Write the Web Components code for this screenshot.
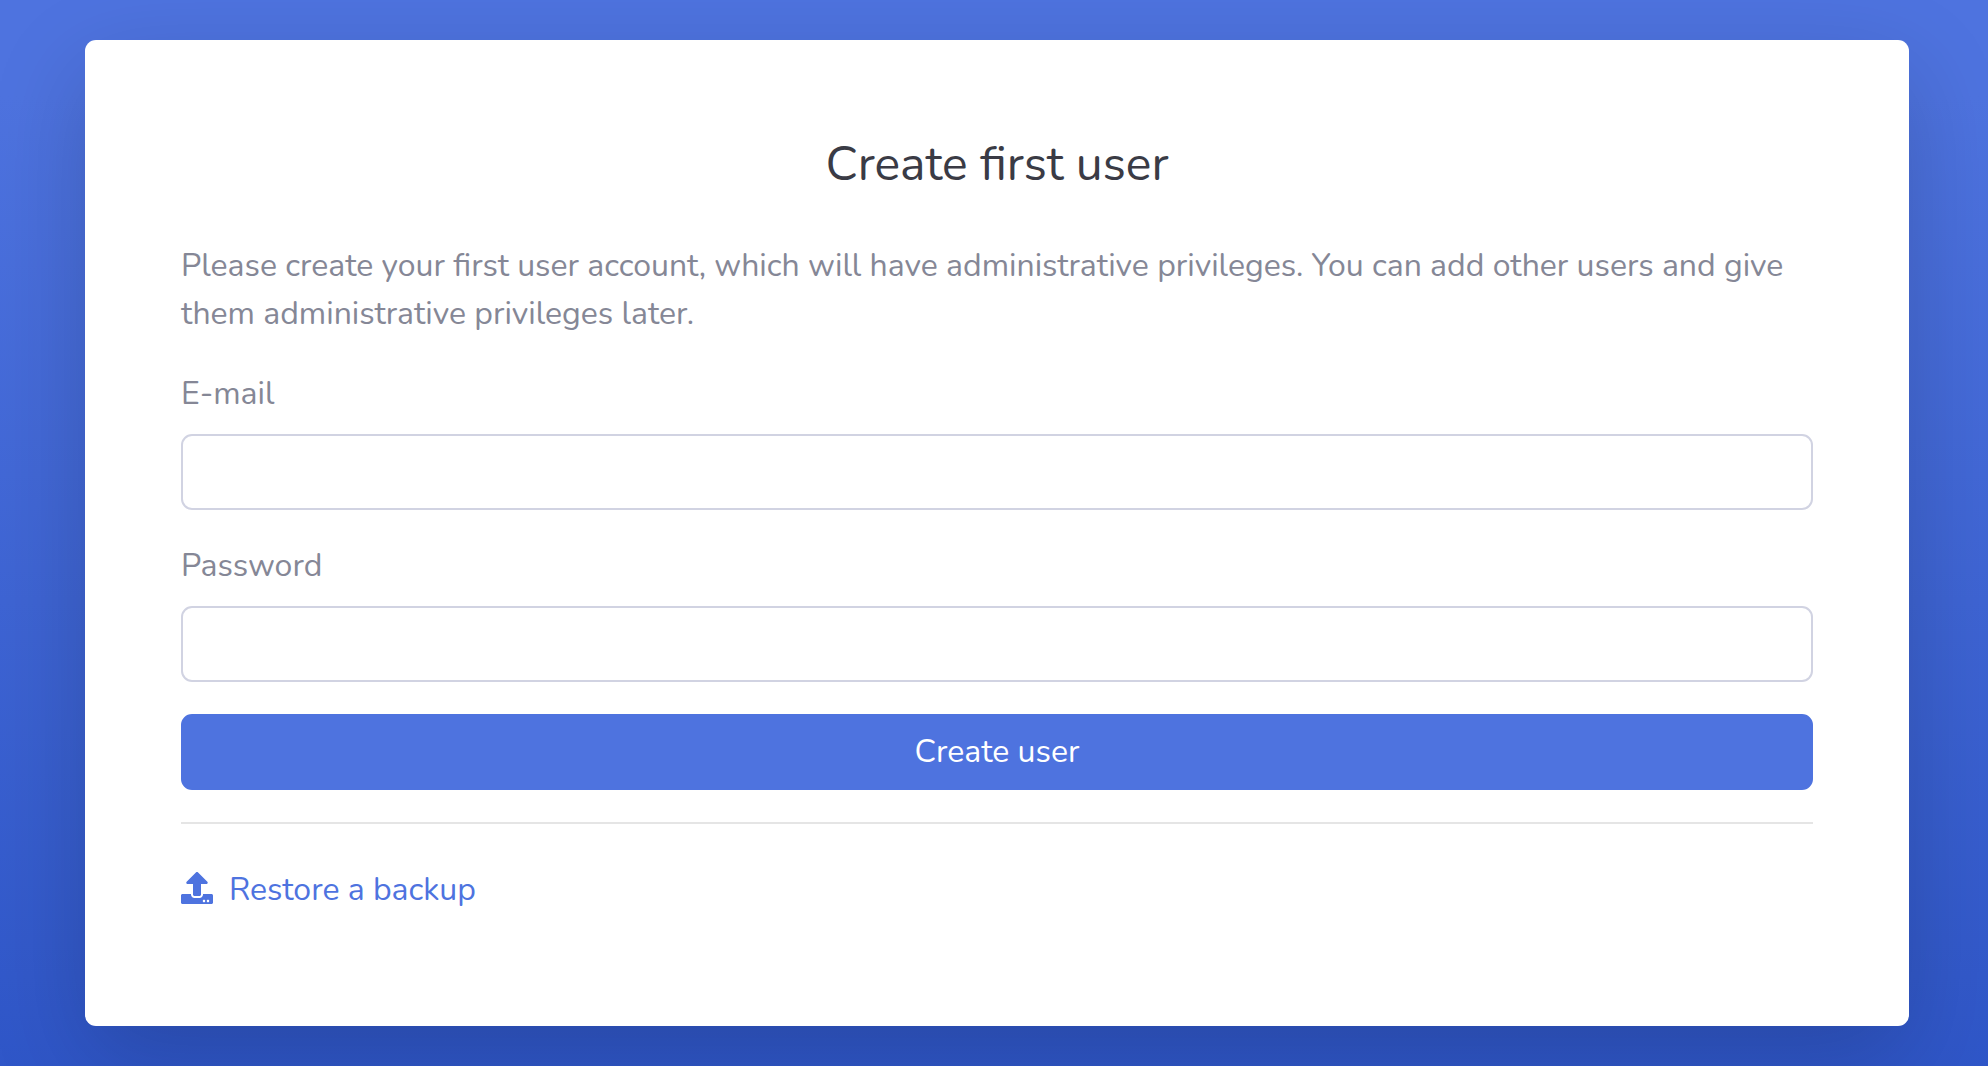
<!DOCTYPE html>
<html lang="en">
<head>
<meta charset="utf-8">
<meta name="viewport" content="width=device-width, initial-scale=1">
<title>Create first user</title>
<style>
  html { min-height: 100%; }
  body {
    margin: 0;
    min-height: 100vh;
    box-sizing: border-box;
    padding: 40px 79px 40px 85px;
    background: linear-gradient(180deg, #4e73df 9%, #224abe 139%) no-repeat;
    font-family: Nunito, Lato, "Open Sans", sans-serif;
    font-size: 32px;
    line-height: 48px;
    color: #858796;
  }
</style>
</head>
<body>
<setup-card>
  <span slot="title">Create first user</span>
  <span slot="intro">Please create your first user account, which will have administrative privileges. You can add other users and give them administrative privileges later.</span>
  <text-field label="E-mail" type="email" name="email"></text-field>
  <text-field label="Password" type="password" name="password"></text-field>
  <submit-button>Create user</submit-button>
  <upload-link slot="footer" href="#restore">Restore a backup</upload-link>
</setup-card>

<script>
  class SetupCard extends HTMLElement {
    constructor() {
      super();
      this.attachShadow({ mode: 'open' }).innerHTML = `
        <style>
          :host { display: block; max-width: 1824px; margin: 0 auto; }
          main {
            box-sizing: border-box;
            padding: 96px;
            border-radius: 11px;
            background: #fff;
            box-shadow: 0 32px 96px rgba(0, 0, 0, .175);
          }
          h1 {
            margin: 0 0 50px;
            font-size: 48px;
            line-height: 56px;
            font-weight: 400;
            text-align: center;
            color: #3a3b45;
          }
          p { margin: 0 0 32px; }
          form { display: flex; flex-direction: column; gap: 32px; }
          hr { margin: 32px 0; border: 0; border-top: 2px solid #e5e5e5; }
          footer { padding: 10px 0 16px; }
        </style>
        <main>
          <h1><slot name="title"></slot></h1>
          <p><slot name="intro"></slot></p>
          <form><slot></slot></form>
          <hr>
          <footer><slot name="footer"></slot></footer>
        </main>`;
    }
  }

  class TextField extends HTMLElement {
    connectedCallback() {
      if (this.shadowRoot) return;
      this.attachShadow({ mode: 'open' }).innerHTML = `
        <style>
          :host { display: flex; flex-direction: column; gap: 16px; }
          label { align-self: flex-start; }
          input {
            box-sizing: border-box;
            width: 100%;
            height: 76px;
            padding: 12px 24px;
            border: 2px solid #d1d3e2;
            border-radius: 11px;
            background: #fff;
            color: #6e707e;
            font: inherit;
          }
          input:focus { outline: 6px solid rgba(78, 115, 223, .25); border-color: #bac8f3; }
        </style>
        <label for="field"></label>
        <input id="field">`;
      this.shadowRoot.querySelector('label').textContent = this.getAttribute('label');
      const input = this.shadowRoot.querySelector('input');
      input.type = this.getAttribute('type');
      input.name = this.getAttribute('name');
    }
  }

  class SubmitButton extends HTMLElement {
    constructor() {
      super();
      this.attachShadow({ mode: 'open' }).innerHTML = `
        <style>
          :host { display: block; }
          button {
            display: block;
            width: 100%;
            padding: 12px 24px;
            border: 2px solid #4e73df;
            border-radius: 11px;
            background: #4e73df;
            color: #fff;
            font: inherit;
            cursor: pointer;
          }
          button:hover { background: #2e59d9; }
        </style>
        <button type="submit"><slot></slot></button>`;
    }
  }

  class UploadLink extends HTMLElement {
    connectedCallback() {
      if (this.shadowRoot) return;
      this.attachShadow({ mode: 'open' }).innerHTML = `
        <style>
          :host { display: flex; }
          a { display: flex; align-items: center; gap: 16px; color: #4e73df; text-decoration: none; }
          a:hover { color: #224abe; }
          svg { width: 32px; height: 32px; padding-bottom: 4px; fill: currentColor; }
        </style>
        <a>
          <svg viewBox="0 0 512 512" aria-hidden="true"><path d="M296 384h-80c-13.3 0-24-10.7-24-24V192h-87.7c-17.8 0-26.7-21.5-14.1-34.1L242.3 5.7c7.5-7.5 19.8-7.5 27.3 0l152.2 152.2c12.6 12.6 3.7 34.1-14.1 34.1H320v168c0 13.3-10.7 24-24 24zm216-8v112c0 13.3-10.7 24-24 24H24c-13.3 0-24-10.7-24-24V376c0-13.3 10.7-24 24-24h136v8c0 30.9 25.1 56 56 56h80c30.9 0 56-25.1 56-56v-8h136c13.3 0 24 10.7 24 24zm-124 88c0-11-9-20-20-20s-20 9-20 20 9 20 20 20 20-9 20-20zm64 0c0-11-9-20-20-20s-20 9-20 20 9 20 20 20 20-9 20-20z"/></svg>
          <span><slot></slot></span>
        </a>`;
      this.shadowRoot.querySelector('a').href = this.getAttribute('href');
    }
  }

  customElements.define('setup-card', SetupCard);
  customElements.define('text-field', TextField);
  customElements.define('submit-button', SubmitButton);
  customElements.define('upload-link', UploadLink);
</script>
</body>
</html>
